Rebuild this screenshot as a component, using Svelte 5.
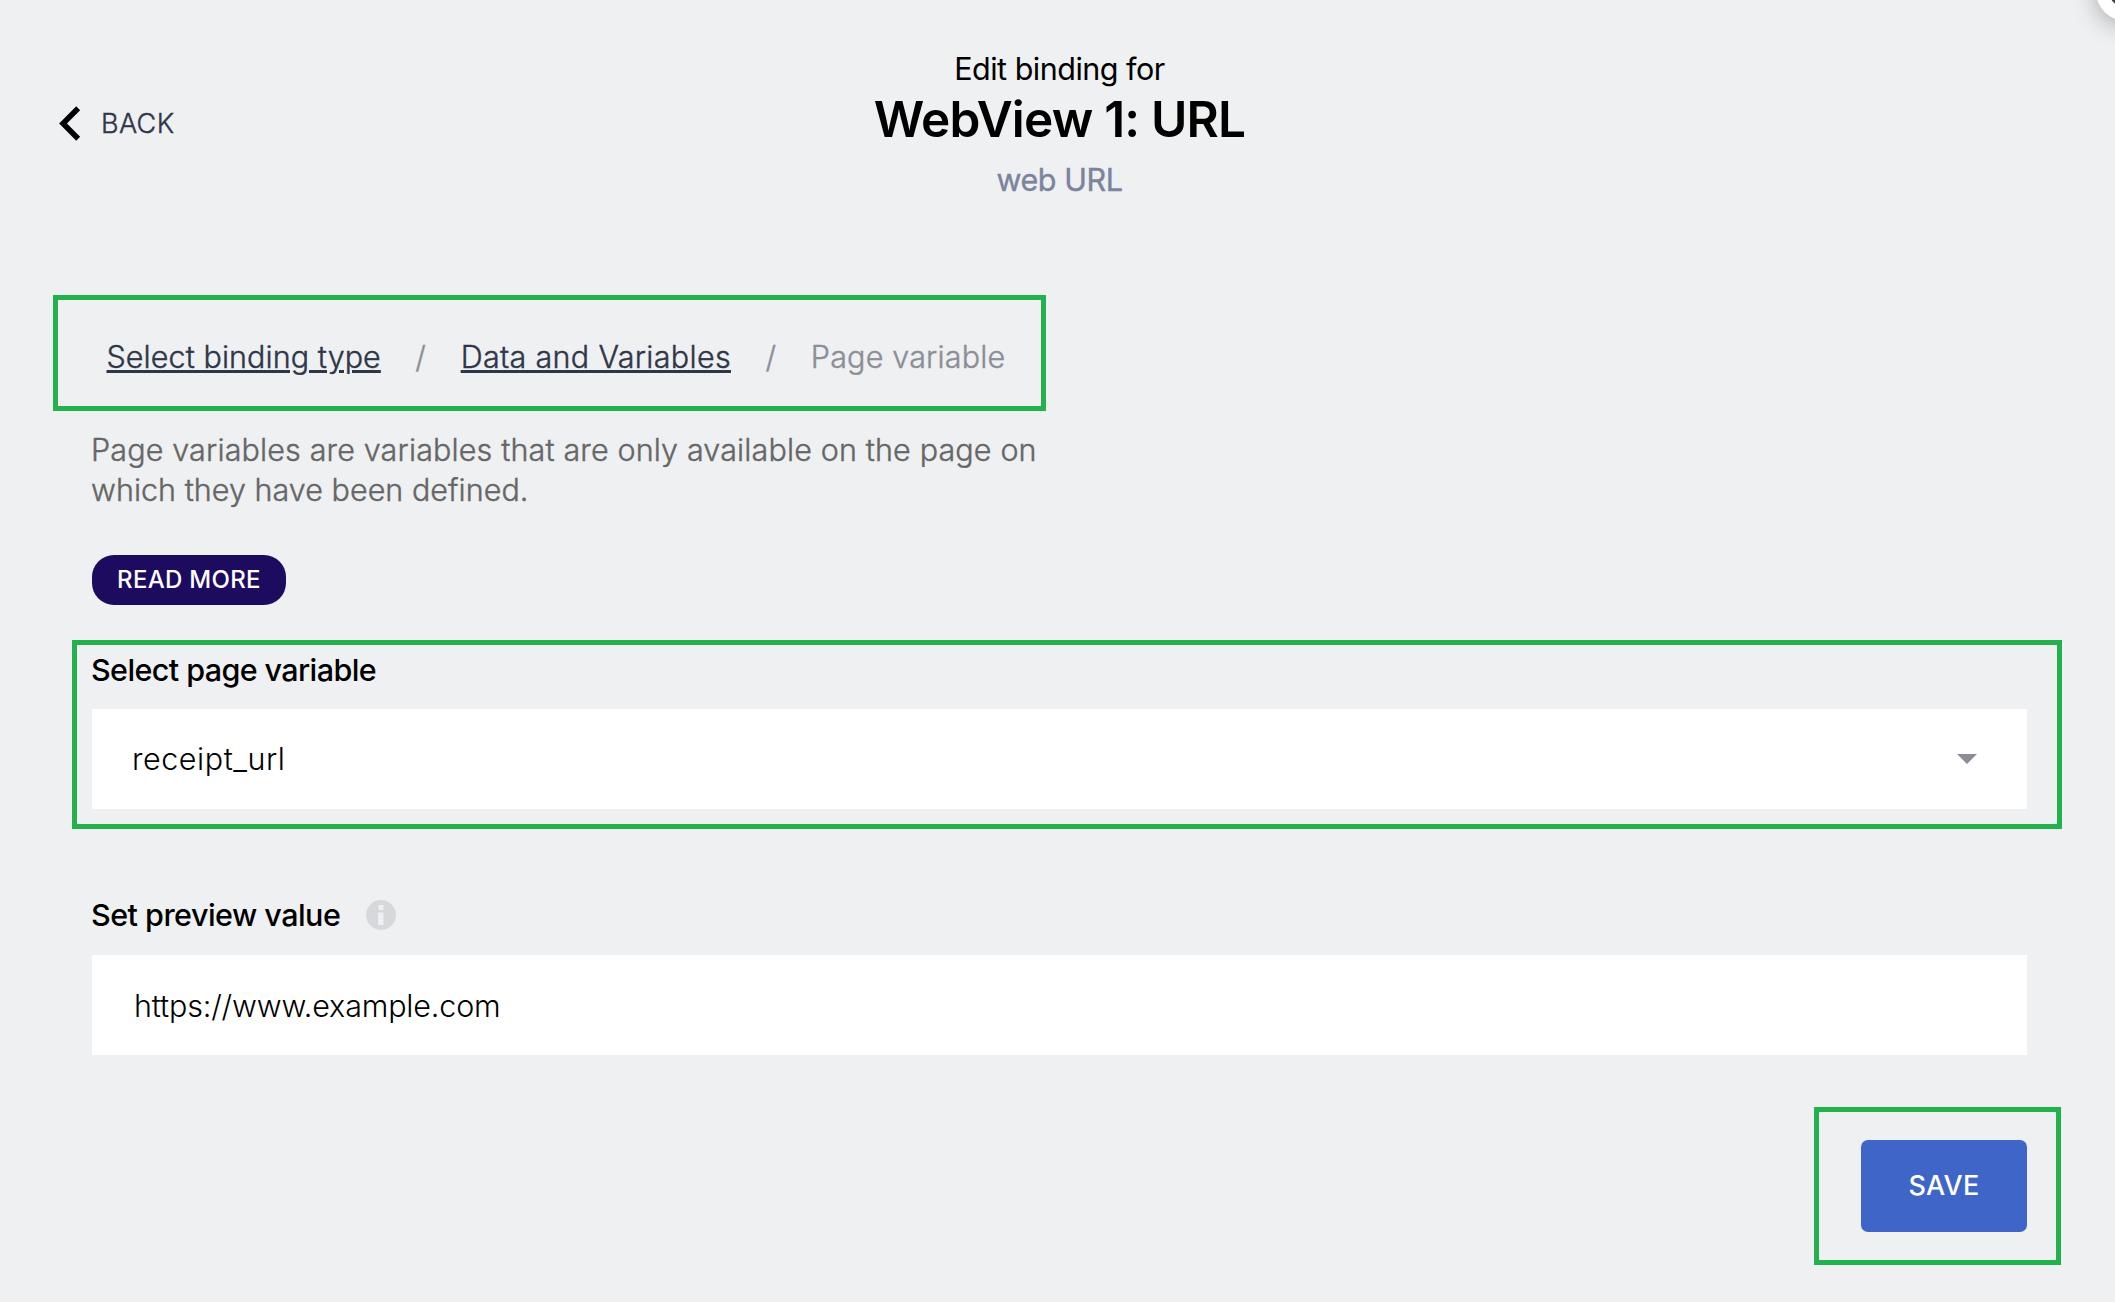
<script lang="ts">
  const crumbs = ['Select binding type', 'Data and Variables'];
  let preview = $state('https://www.example.com');
</script>

<main class="page">
  <div class="floating" aria-hidden="true">
    <svg viewBox="0 0 60 60"><path d="M27 31 L18.5 39.5 L27 48" /></svg>
  </div>

  <header class="header">
    <button class="back" type="button">
      <svg class="chevron" viewBox="0 0 22 36" aria-hidden="true">
        <path d="M19.2 2.2 L4 17.5 L19.2 32.8" />
      </svg>
      <span>BACK</span>
    </button>
    <div class="titles">
      <p class="overline">Edit binding for</p>
      <h1>WebView 1: URL</h1>
      <p class="type">web URL</p>
    </div>
  </header>

  <nav class="frame crumbs">
    {#each crumbs as crumb, i}
      <a class="crumb" class:second={i === 1} href="#{i}">{crumb}</a>
      <span class="slash">/</span>
    {/each}
    <span class="current">Page variable</span>
  </nav>

  <section class="intro">
    <p>Page variables are variables that are only available on the page on<br /><span class="tight">which they have been defined.</span></p>
    <button class="more" type="button">READ MORE</button>
  </section>

  <section class="frame variable">
    <div class="label">Select page variable</div>
    <div class="field">
      <span class="value">receipt_url</span>
      <svg class="caret" viewBox="0 0 20 10" aria-hidden="true"><path d="M0 0H20L10 10Z" /></svg>
    </div>
  </section>

  <section class="preview">
    <div class="label preview-label">
      <span>Set preview value</span>
      <svg class="info" viewBox="0 0 30 30" aria-hidden="true">
        <circle cx="15" cy="15" r="15" />
        <path d="M12.5 5h5v5h-5z M12 12.5h5.5V25h-5.5z" />
      </svg>
    </div>
    <input class="field url" bind:value={preview} aria-label="Set preview value" />
  </section>

  <div class="frame actions">
    <button class="save" type="button">SAVE</button>
  </div>
</main>

<style>
  :global(body) {
    background: #eef0f2;
  }

  .page {
    position: relative;
    box-sizing: border-box;
    width: 2115px;
    height: 1302px;
    padding-top: 49px;
    overflow: hidden;
    background: #eef0f2;
    color: #000;
    font: 300 30.5px/40px Inter, 'Liberation Sans', sans-serif;
  }

  p,
  h1 {
    margin: 0;
  }

  button {
    border: 0;
    padding: 0;
    background: none;
    font-family: inherit;
  }

  svg {
    display: block;
    flex: none;
  }

  .floating {
    position: absolute;
    top: -39px;
    right: -41px;
    width: 60px;
    height: 60px;
    border-radius: 50%;
    background: #fff;
    box-shadow: 0 4px 24px rgba(0, 0, 0, 0.3);
  }

  .floating path {
    fill: none;
    stroke: #3a4050;
    stroke-width: 4;
  }

  .header {
    display: grid;
    grid-template-columns: 1fr auto 1fr;
    height: 246px;
    padding: 0 55px 0 59px;
  }

  .back {
    display: flex;
    align-items: center;
    align-self: start;
    justify-self: start;
    gap: 20px;
    height: 36px;
    margin-top: 57px;
    color: #2f3648;
    font-size: 27px;
    font-weight: 300;
    letter-spacing: 0.35px;
  }

  .back span {
    margin-top: -1px;
  }

  /* Slightly heavier than the light weight, still thinner than regular */
  .back span,
  .crumbs,
  .intro p,
  .type {
    -webkit-text-stroke: 0.4px currentColor;
  }

  .chevron {
    width: 22px;
    height: 36px;
  }

  .chevron path {
    fill: none;
    stroke: #000;
    stroke-width: 5.5;
  }

  .titles {
    text-align: center;
  }

  .overline {
    font-weight: 400;
    letter-spacing: -0.5px;
  }

  h1 {
    font-size: 49.5px;
    font-weight: 600;
    line-height: 60px;
    letter-spacing: -0.8px;
  }

  .type {
    color: #7b849c;
    font-weight: 400;
    line-height: 62px;
    letter-spacing: -0.4px;
  }

  .frame {
    box-sizing: border-box;
    border: 5px solid #22b14c;
  }

  .crumbs {
    display: flex;
    align-items: center;
    gap: 34.5px;
    width: 993px;
    height: 116px;
    margin-left: 53px;
    padding: 8px 0 0 48.5px;
    white-space: nowrap;
  }

  .crumb {
    color: #2f3648;
    letter-spacing: 0.07px;
    text-decoration: underline;
    text-decoration-thickness: 3px;
    text-underline-offset: 2px;
  }

  .second {
    letter-spacing: 0.31px;
  }

  .slash,
  .current {
    color: #8c8e96;
    letter-spacing: 0.18px;
  }

  .intro {
    padding: 19px 0 0 91px;
    color: #666;
  }

  .intro p {
    letter-spacing: 0.14px;
    white-space: nowrap;
  }

  .intro .tight {
    letter-spacing: 0.03px;
  }

  .more {
    display: block;
    width: 194px;
    height: 50px;
    margin: 45px 0 0 1px;
    padding-bottom: 1px;
    border-radius: 22px;
    background: #1c0b5e;
    color: #fff;
    font-size: 24px;
    font-weight: 500;
    letter-spacing: 0.3px;
  }

  .variable {
    width: 1990px;
    height: 189px;
    margin: 35px 0 0 72px;
    padding: 5px 30px 15px 15px;
  }

  .label {
    margin-bottom: 19px;
    font-weight: 500;
    letter-spacing: -0.6px;
    text-indent: -1px;
  }

  .field {
    display: flex;
    align-items: center;
    justify-content: space-between;
    box-sizing: border-box;
    width: 100%;
    height: 100px;
    padding: 0 50px 0 40px;
    background: #fff;
  }

  .value {
    letter-spacing: 0.55px;
  }

  .caret {
    width: 20px;
    height: 10px;
    fill: #8a8d96;
  }

  .preview {
    padding: 66px 88px 0 92px;
  }

  .preview-label {
    display: flex;
    align-items: center;
    gap: 26px;
    margin-bottom: 20px;
    letter-spacing: -0.52px;
  }

  .info {
    width: 30px;
    height: 30px;
    fill: #d7d8dc;
  }

  .info path {
    fill: #eef0f2;
  }

  .url {
    display: block;
    border: 0;
    padding: 0 50px 0 42px;
    color: inherit;
    font: inherit;
    letter-spacing: -0.17px;
  }

  .actions {
    width: 247px;
    height: 158px;
    margin: 52px 0 0 1814px;
    padding: 28px 0 0 42px;
  }

  .save {
    display: block;
    width: 166px;
    height: 92px;
    padding-bottom: 1px;
    border-radius: 7px;
    background: #3f65c9;
    color: #fff;
    font-size: 27px;
    font-weight: 500;
    letter-spacing: 0.3px;
  }
</style>
